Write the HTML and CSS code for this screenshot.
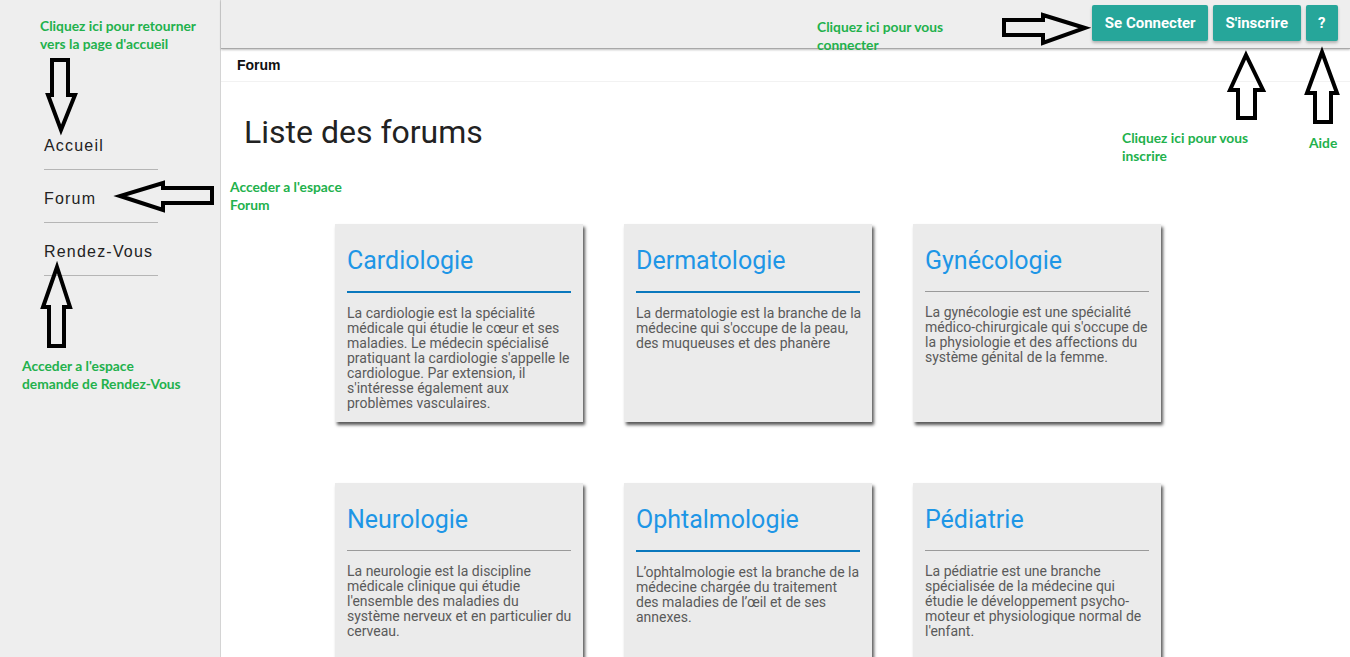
FILE: index.html
```html
<!DOCTYPE html>
<html lang="fr">
<head>
<meta charset="utf-8">
<title>Forum</title>
<link rel="stylesheet" href="styles.css">
</head>
<body>
<div class="app">
  <aside class="sidebar">
    <nav class="nav">
      <a class="nav-item" href="#">Accueil</a>
      <a class="nav-item" href="#">Forum</a>
      <a class="nav-item" href="#">Rendez-Vous</a>
    </nav>
  </aside>
  <main class="main">
    <header class="topbar">
      <button class="btn">Se Connecter</button>
      <button class="btn">S'inscrire</button>
      <button class="btn">?</button>
    </header>
    <div class="subbar">Forum</div>
    <section class="content">
      <h1 class="title">Liste des forums</h1>
      <div class="cards">
        <div class="card">
          <h2 class="card-title">Cardiologie</h2>
          <div class="divider blue"></div>
          <p class="card-text">La cardiologie est la spécialité médicale qui étudie le cœur et ses maladies. Le médecin spécialisé pratiquant la cardiologie s'appelle le cardiologue. Par extension, il s'intéresse également aux problèmes vasculaires.</p>
        </div>
        <div class="card">
          <h2 class="card-title">Dermatologie</h2>
          <div class="divider blue"></div>
          <p class="card-text">La dermatologie est la branche de la médecine qui s'occupe de la peau, des muqueuses et des phanère</p>
        </div>
        <div class="card">
          <h2 class="card-title">Gynécologie</h2>
          <div class="divider"></div>
          <p class="card-text">La gynécologie est une spécialité médico-chirurgicale qui s'occupe de la physiologie et des affections du système génital de la femme.</p>
        </div>
        <div class="card">
          <h2 class="card-title">Neurologie</h2>
          <div class="divider"></div>
          <p class="card-text">La neurologie est la discipline médicale clinique qui étudie l'ensemble des maladies du système nerveux et en particulier du cerveau.</p>
        </div>
        <div class="card">
          <h2 class="card-title">Ophtalmologie</h2>
          <div class="divider blue"></div>
          <p class="card-text">L’ophtalmologie est la branche de la médecine chargée du traitement des maladies de l’œil et de ses annexes.</p>
        </div>
        <div class="card">
          <h2 class="card-title">Pédiatrie</h2>
          <div class="divider"></div>
          <p class="card-text">La pédiatrie est une branche spécialisée de la médecine qui étudie le développement psycho-moteur et physiologique normal de l'enfant.</p>
        </div>
      </div>
    </section>
  </main>
</div>

<div class="notes">
  <svg class="arrows" width="1350" height="657" viewBox="0 0 1350 657" xmlns="http://www.w3.org/2000/svg">
    <g fill="none" stroke="#000" stroke-width="4" stroke-linejoin="miter">
      <polygon points="52,60 68,60 68,95 75,95 61,130 48,95 52,95"/>
      <polygon points="212,188 212,203 163,203 163,210 120,196 163,183 163,188"/>
      <polygon points="57,267 70,307 64,307 64,346 49,346 49,307 43,307"/>
      <polygon points="1004,20 1043,20 1043,15 1085,28 1043,43 1043,35 1004,35"/>
      <polygon points="1246,55 1263,90 1255,90 1255,118 1238,118 1238,90 1230,90"/>
      <polygon points="1322,52 1337,93 1331,93 1331,122 1315,122 1315,93 1307,93"/>
    </g>
  </svg>
  <div class="note note-home">Cliquez ici pour retourner<br>vers la page d'accueil</div>
  <div class="note note-forum">Acceder a l'espace<br>Forum</div>
  <div class="note note-rdv">Acceder a l'espace<br>demande de Rendez-Vous</div>
  <div class="note note-login">Cliquez ici pour vous<br>connecter</div>
  <div class="note note-signup">Cliquez ici pour vous<br>inscrire</div>
  <div class="note note-help">Aide</div>
</div>
</body>
</html>
```

FILE: styles.css
```css
* { box-sizing: border-box; }

html, body {
  margin: 0;
  padding: 0;
  height: 100%;
  overflow: hidden;
  background: #fff;
  font-family: Roboto, "Liberation Sans", Arial, sans-serif;
}

.app {
  display: flex;
  height: 657px;
  overflow: hidden;
}

.sidebar {
  width: 221px;
  flex: 0 0 221px;
  background: #eeeeee;
  border-right: 1px solid #d4d4d4;
  padding-top: 117px;
}

.nav {
  display: flex;
  flex-direction: column;
  margin-left: 44px;
  width: 114px;
}

.nav-item {
  display: block;
  padding: 20px 0 14px;
  line-height: 18px;
  font-family: "Liberation Sans", Arial, sans-serif;
  font-size: 16px;
  letter-spacing: 1.2px;
  color: #222;
  text-decoration: none;
  border-bottom: 1px solid #b5b5b5;
}

.main {
  flex: 1;
  display: flex;
  flex-direction: column;
  min-width: 0;
}

.topbar {
  flex: 0 0 49px;
  height: 49px;
  background: #eeeeee;
  display: flex;
  justify-content: flex-end;
  align-items: flex-start;
  gap: 5px;
  padding: 5px 12px 0 0;
  border-bottom: 1px solid #a8a8a8;
  box-shadow: 0 1px 2px rgba(0,0,0,0.25);
  position: relative;
  z-index: 1;
}

.btn {
  height: 36px;
  padding: 0 12.5px;
  border: none;
  border-radius: 2px;
  background: #26a69a;
  color: #fff;
  font-family: Roboto, "Liberation Sans", Arial, sans-serif;
  font-size: 15px;
  font-weight: 700;
  box-shadow: 0 2px 3px rgba(0,0,0,0.25);
}

.subbar {
  flex: 0 0 33px;
  height: 33px;
  padding-left: 16px;
  display: flex;
  align-items: center;
  font-family: "Liberation Sans", Arial, sans-serif;
  font-weight: bold;
  font-size: 14px;
  color: #111;
  border-bottom: 1px solid #f2f2f2;
}

.content {
  flex: 0 0 auto;
  padding: 0 0 0 23px;
}

.title {
  margin: 31px 0 0;
  font-size: 32px;
  font-weight: 400;
  line-height: 38px;
  color: #222;
}

.cards {
  display: grid;
  grid-template-columns: repeat(3, 248px);
  column-gap: 41px;
  row-gap: 61px;
  margin: 73px 0 0 91px;
}

.card {
  height: 198px;
  background: #ebebeb;
  padding: 14px 9px 0 12px;
  box-shadow: 2px 3px 3px rgba(60,60,60,0.85);
}

.card-title {
  margin: 8px 0 0;
  font-size: 25px;
  font-weight: 400;
  line-height: 30px;
  color: #1e96e6;
}

.divider {
  margin-top: 15px;
  margin-right: 3px;
  height: 1px;
  background: #9a9a9a;
}

.divider.blue {
  height: 2px;
  background: #0a78bd;
}

.card-text {
  margin: 13px 0 0;
  font-size: 14px;
  line-height: 15px;
  color: #5a5a5a;
}

.notes {
  position: absolute;
  left: 0;
  top: 0;
  width: 1350px;
  height: 657px;
  pointer-events: none;
  z-index: 5;
}

.arrows {
  position: absolute;
  left: 0;
  top: 0;
}

.note {
  position: absolute;
  font-family: Lato, "Open Sans", sans-serif;
  font-weight: bold;
  font-size: 13.8px;
  line-height: 18px;
  color: #22b14c;
  white-space: nowrap;
}

.note-home { left: 40px; top: 17px; }
.note-forum { left: 230px; top: 178px; }
.note-rdv { left: 22px; top: 357px; }
.note-login { left: 817px; top: 18px; }
.note-signup { left: 1122px; top: 129px; }
.note-help { left: 1309px; top: 134px; }
```
